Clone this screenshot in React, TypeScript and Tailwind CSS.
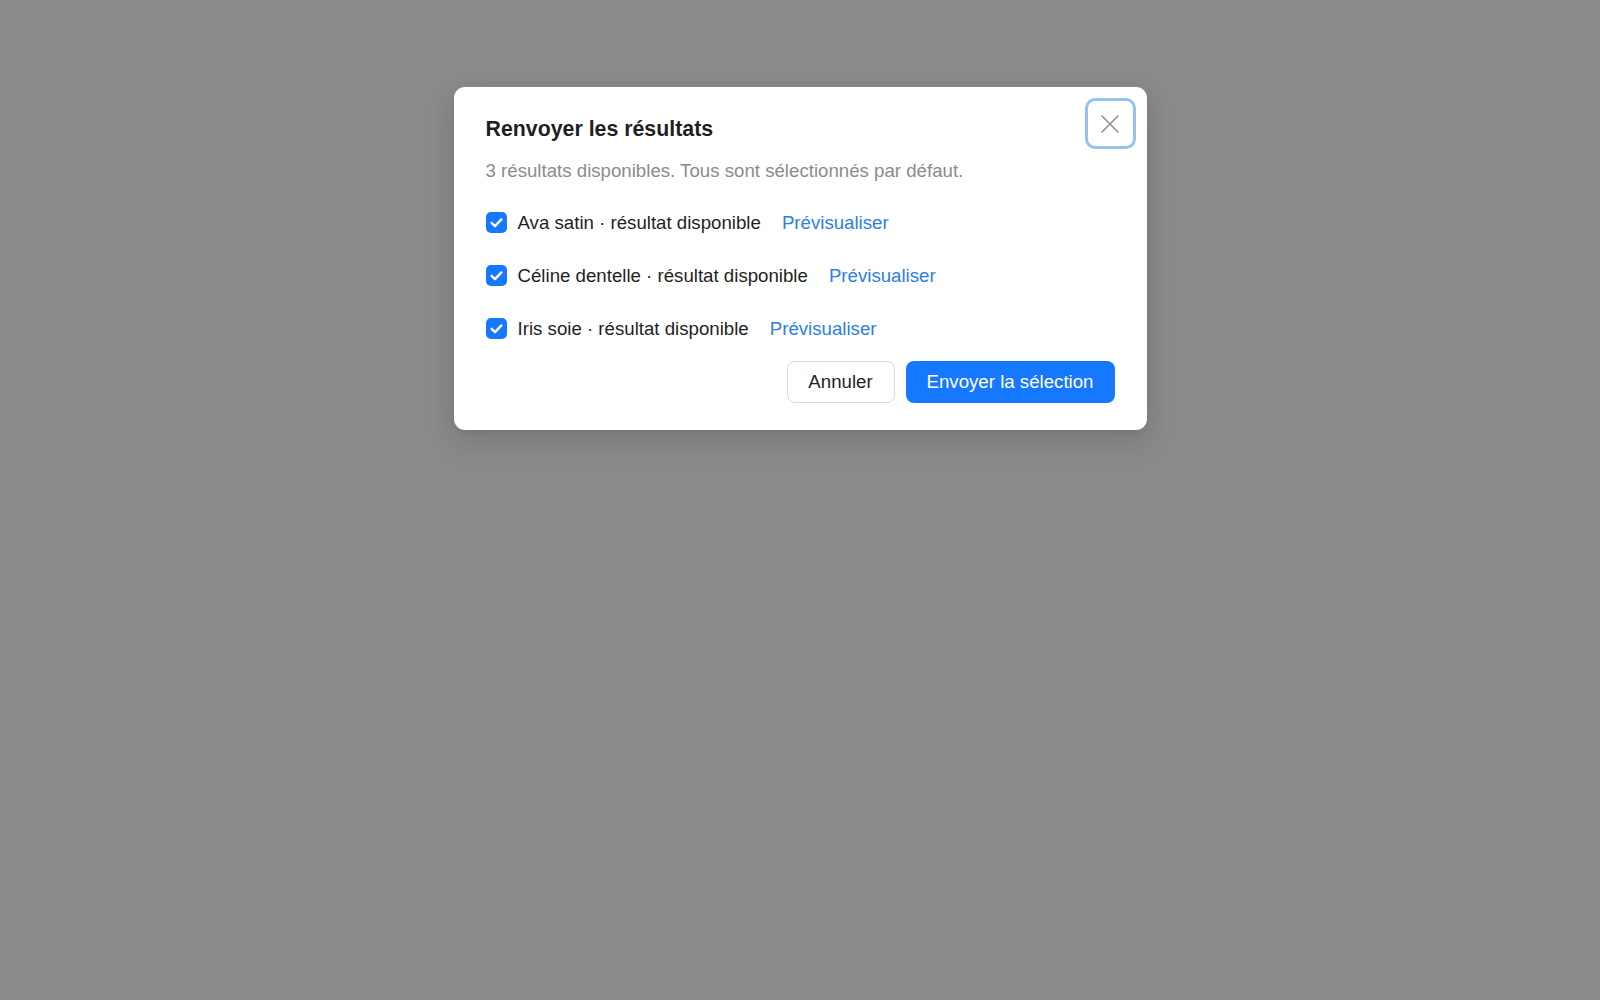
import { useState } from "react";

const items = [
	{ id: "ava", label: "Ava satin · résultat disponible" },
	{ id: "celine", label: "Céline dentelle · résultat disponible" },
	{ id: "iris", label: "Iris soie · résultat disponible" },
];

function CheckBox({ checked }: { checked: boolean }) {
	return (
		<span
			className={
				checked
					? "flex h-[21px] w-[21px] shrink-0 items-center justify-center rounded-[5px] bg-[#1677ff]"
					: "flex h-[21px] w-[21px] shrink-0 items-center justify-center rounded-[5px] border border-[#d9d9d9] bg-white"
			}
		>
			{checked && (
				<svg width="21" height="21" viewBox="0 0 21 21" fill="none">
					<path d="M5.6 10.8 9 14.1 15.4 7.4" stroke="white" strokeWidth="2.4" strokeLinecap="round" strokeLinejoin="round" />
				</svg>
			)}
		</span>
	);
}

export default function App() {
	const [selected, setSelected] = useState<string[]>(items.map((i) => i.id));

	const toggle = (id: string) =>
		setSelected((s) => (s.includes(id) ? s.filter((x) => x !== id) : [...s, id]));

	return (
		<div className="min-h-screen bg-[#8a8b8d] font-['Liberation_Sans',Arial,sans-serif] flex justify-center pt-[87px]">
			<div className="relative w-[693px] self-start rounded-[11px] bg-white px-8 pt-[26px] pb-[27px] shadow-[0_8px_21px_0_rgba(0,0,0,0.08),0_4px_8px_-5px_rgba(0,0,0,0.12),0_12px_37px_11px_rgba(0,0,0,0.05)]">
				<button className="absolute right-[11px] top-[11px] flex h-[51px] w-[51px] items-center justify-center rounded-[10px] border-[3px] border-[#93c4f0] bg-white text-[#8c8c8c]">
					<svg width="20" height="20" viewBox="0 0 20 20" fill="none">
						<path d="M2 2 18 18M18 2 2 18" stroke="currentColor" strokeWidth="1.5" strokeLinecap="round" />
					</svg>
				</button>

				<h2 className="text-[21.33px] leading-[32px] font-bold text-[#1f1f1f]">Renvoyer les résultats</h2>
				<p className="mt-[11px] text-[18.67px] leading-[29px] text-[#8c8c8c]">
					3 résultats disponibles. Tous sont sélectionnés par défaut.
				</p>

				<div className="mt-[23px] flex flex-col gap-[24px]">
					{items.map((item) => (
						<label key={item.id} className="flex h-[29px] items-center cursor-pointer" onClick={() => toggle(item.id)}>
							<CheckBox checked={selected.includes(item.id)} />
							<span className="ml-[11px] text-[18.67px] text-[#1f1f1f]">{item.label}</span>
							<a className="ml-[21px] text-[18.67px] text-[#2d7ee6]">Prévisualiser</a>
						</label>
					))}
				</div>

				<div className="mt-[18px] flex justify-end gap-[11px]">
					<button className="h-[42px] w-[108px] rounded-lg border border-[#d9d9d9] bg-white text-[18.67px] text-[#1f1f1f]">
						Annuler
					</button>
					<button className="h-[42px] w-[209px] rounded-lg bg-[#1677ff] text-[18.67px] text-white">
						Envoyer la sélection
					</button>
				</div>
			</div>
		</div>
	);
}
